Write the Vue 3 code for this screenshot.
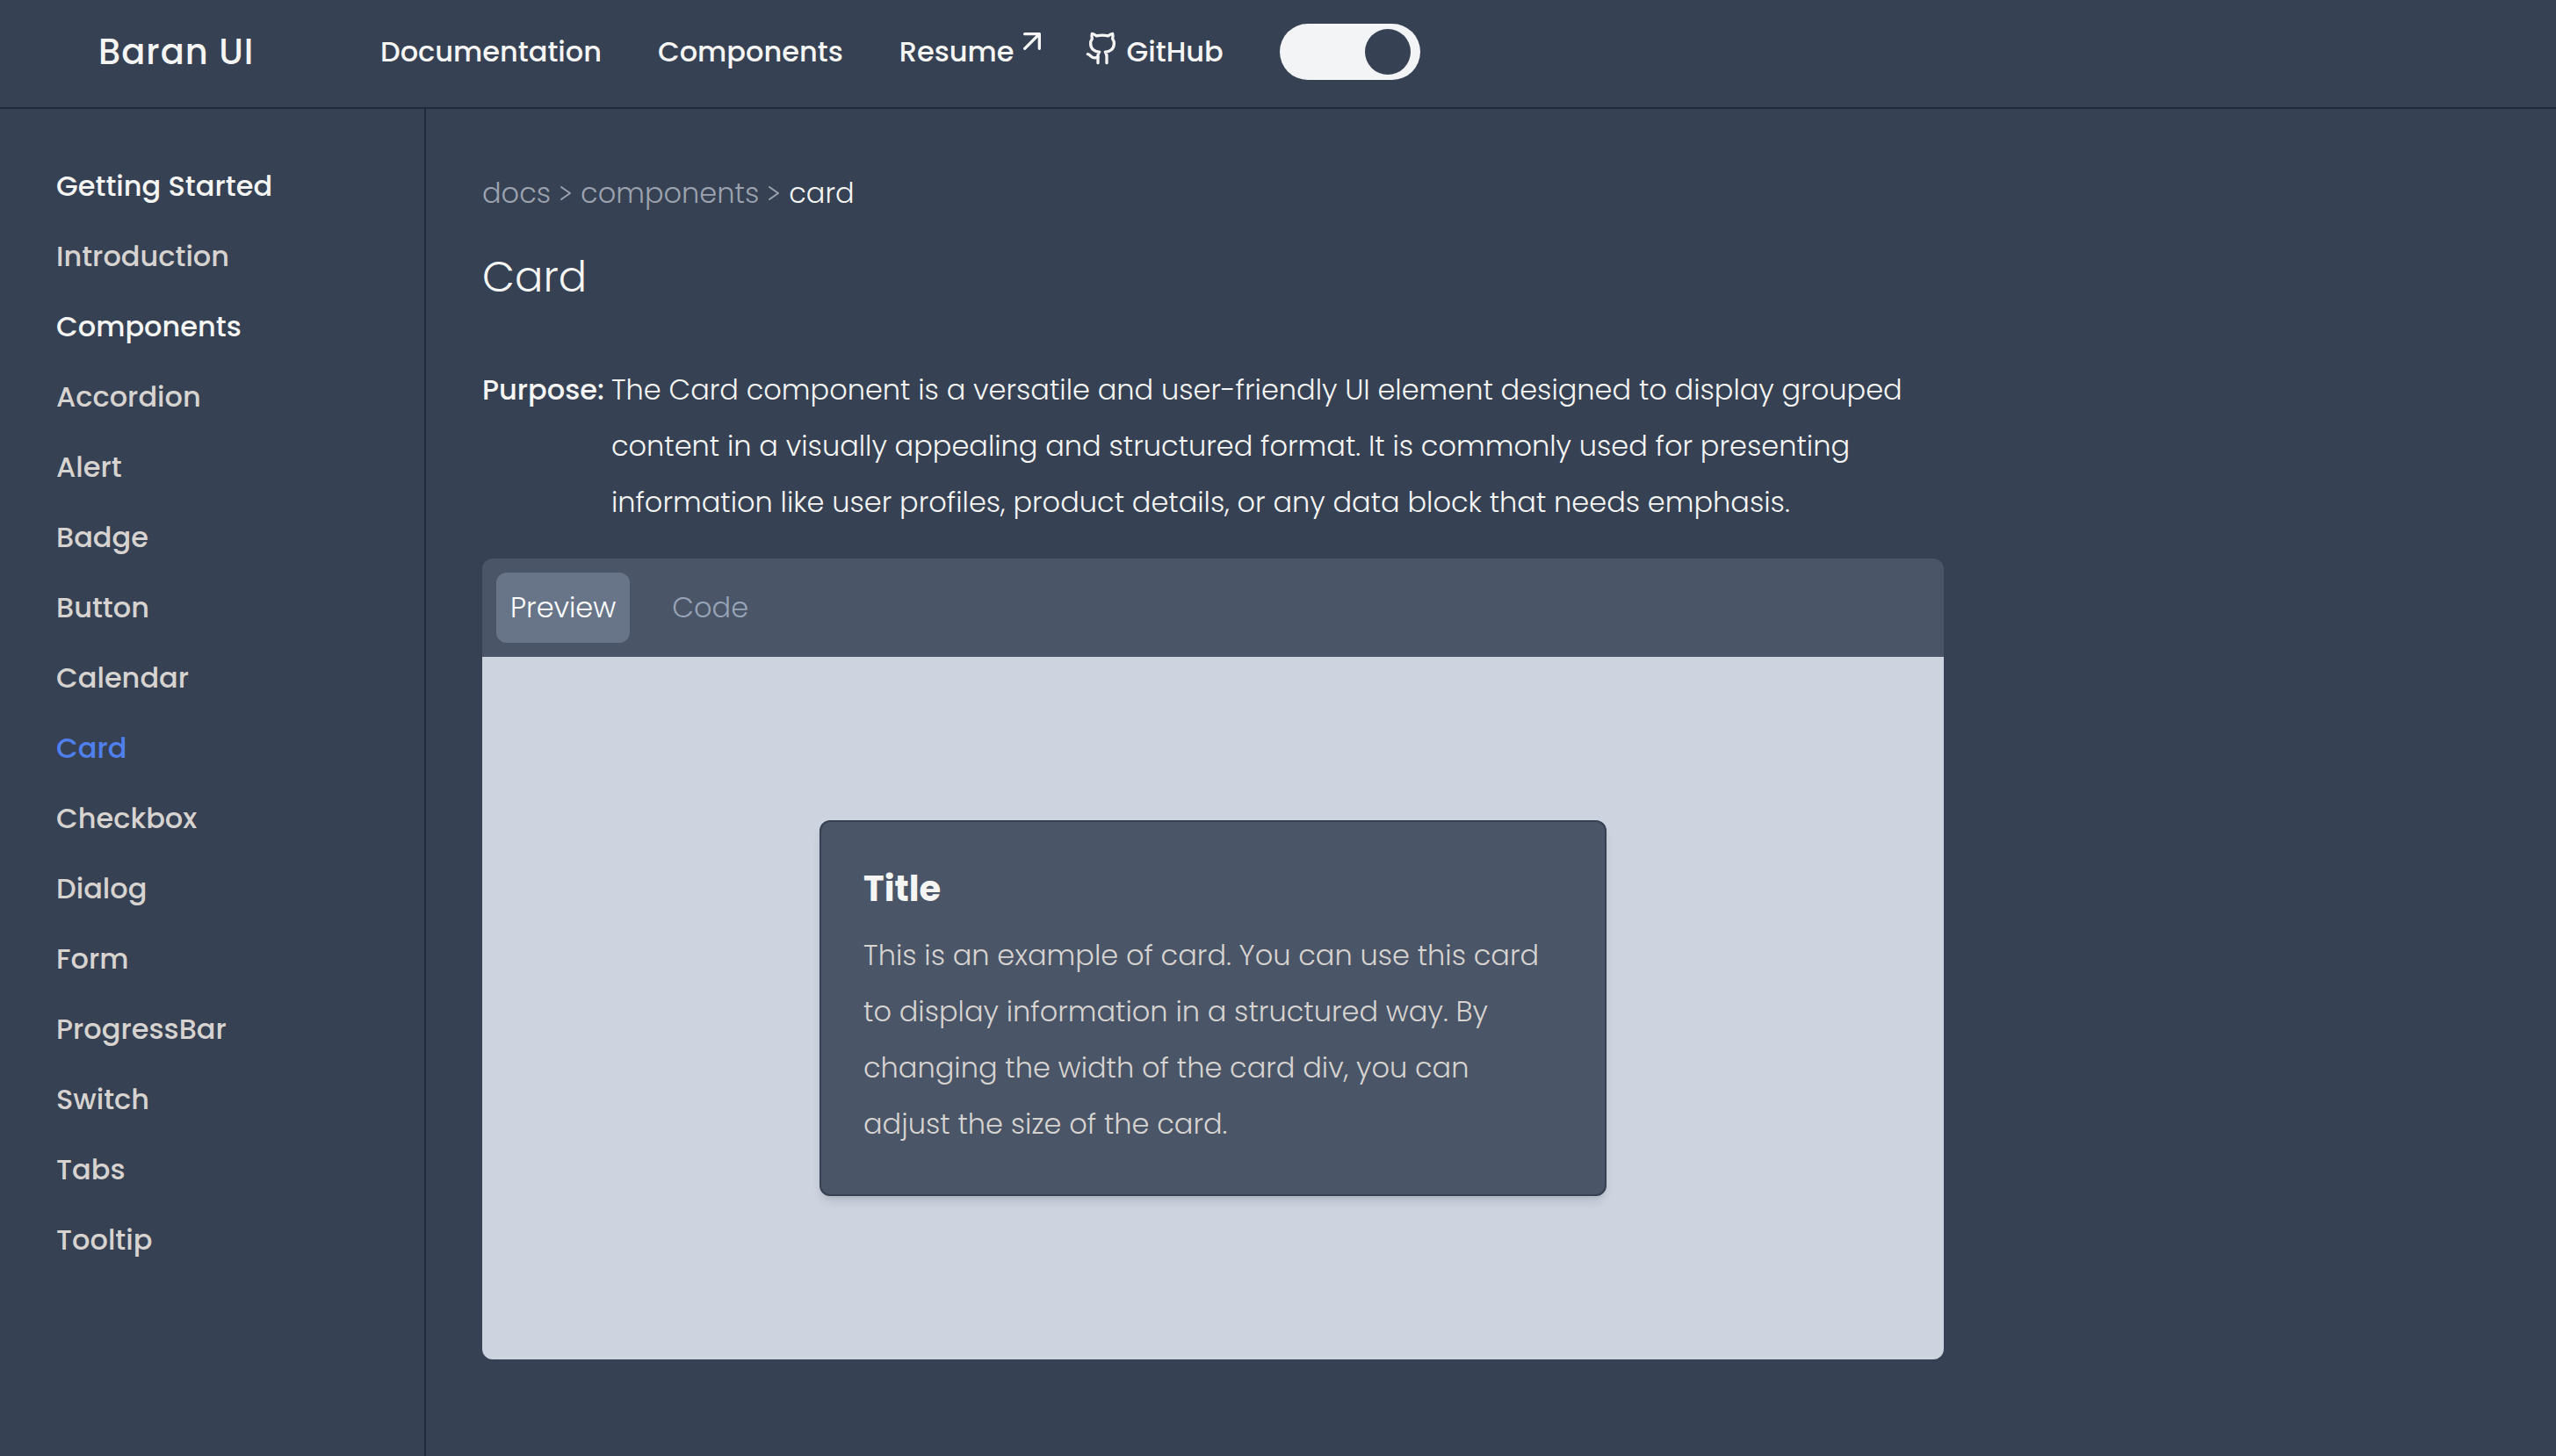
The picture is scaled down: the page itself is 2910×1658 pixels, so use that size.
<script setup>
import { ref } from 'vue'

const darkMode = ref(true)
const activeTab = ref('Preview')
const tabs = ['Preview', 'Code']

const sections = [
  { title: 'Getting Started', items: ['Introduction'] },
  {
    title: 'Components',
    items: [
      'Accordion', 'Alert', 'Badge', 'Button', 'Calendar', 'Card', 'Checkbox',
      'Dialog', 'Form', 'ProgressBar', 'Switch', 'Tabs', 'Tooltip',
    ],
  },
]
const current = 'Card'
</script>

<template>
  <div class="app">
    <header class="topbar">
      <a class="brand" href="#">Baran UI</a>
      <nav class="nav" aria-label="Main">
        <a href="#">Documentation</a>
        <a href="#">Components</a>
        <a href="#">
          Resume
          <svg class="arrow" viewBox="6 6 12 12" aria-hidden="true">
            <path d="M7 7h10v10M7 17 17 7" />
          </svg>
        </a>
        <a href="#">
          <svg class="github" viewBox="0 0 24 24" aria-hidden="true">
            <path d="M15 22v-4a4.8 4.8 0 0 0-1-3.5c3 0 6-2 6-5.5.08-1.25-.27-2.48-1-3.5.28-1.15.28-2.35 0-3.5 0 0-1 0-3 1.5-2.64-.5-5.36-.5-8 0C6 2 5 2 5 2c-.3 1.15-.3 2.35 0 3.5A5.403 5.403 0 0 0 4 9c0 3.5 3 5.5 6 5.5-.39.49-.68 1.05-.85 1.65-.17.6-.22 1.23-.15 1.85v4" />
            <path d="M9 18c-4.51 2-5-2-7-2" />
          </svg>
          GitHub
        </a>
        <input v-model="darkMode" class="toggle" type="checkbox" role="switch" aria-label="Dark mode" />
      </nav>
    </header>

    <div class="layout">
      <aside class="sidebar">
        <nav v-for="section in sections" :key="section.title" :aria-label="section.title">
          <h2>{{ section.title }}</h2>
          <a
            v-for="item in section.items"
            :key="item"
            href="#"
            :class="{ current: item === current }"
          >{{ item }}</a>
        </nav>
      </aside>

      <main class="content">
        <nav class="crumbs" aria-label="Breadcrumb">
          <a href="#">docs</a>
          <svg viewBox="0 0 16 20" aria-hidden="true"><path d="M3 3l10 7-10 7" /></svg>
          <a href="#">components</a>
          <svg viewBox="0 0 16 20" aria-hidden="true"><path d="M3 3l10 7-10 7" /></svg>
          <a href="#" class="here" aria-current="page">card</a>
        </nav>

        <h1>Card</h1>

        <div class="purpose">
          <strong>Purpose:</strong>
          <p>
            The Card component is a versatile and user-friendly UI element designed to display grouped
            content in a visually appealing and structured format. It is commonly used for presenting
            information like user profiles, product details, or any data block that needs emphasis.
          </p>
        </div>

        <section class="panel">
          <div class="tabs" role="tablist">
            <button
              v-for="tab in tabs"
              :key="tab"
              type="button"
              role="tab"
              :aria-selected="tab === activeTab"
              :class="{ active: tab === activeTab }"
              @click="activeTab = tab"
            >{{ tab }}</button>
          </div>
          <div class="stage" role="tabpanel">
            <article class="card">
              <h3>Title</h3>
              <p>
                This is an example of card. You can use this card to display information in a
                structured way. By changing the width of the card div, you can adjust the size of
                the card.
              </p>
            </article>
          </div>
        </section>
      </main>
    </div>
  </div>
</template>

<style>
body {
  margin: 0;
  background: #364153;
}
</style>

<style scoped>
.app {
  display: flex;
  flex-direction: column;
  min-height: 100vh;
  background: #364153;
  color: #f5f5f4;
  font-family: Poppins, Inter, sans-serif;
  font-size: 32px;
  line-height: 64px;
  font-weight: 300;
}
.app * {
  box-sizing: border-box;
}
h1, h2, h3, p {
  margin: 0;
}
a {
  color: inherit;
  text-decoration: none;
}
svg {
  flex: none;
  fill: none;
  stroke: currentColor;
  stroke-width: 2;
  stroke-linecap: round;
  stroke-linejoin: round;
}

.topbar {
  display: flex;
  align-items: center;
  padding: 27px 112px 31px;
  border-bottom: 2px solid #1f2a3c;
  font-weight: 500;
}
.brand {
  width: 321px;
  font-size: 40px;
  letter-spacing: 1px;
}
.nav {
  display: flex;
  align-items: center;
  gap: 64px;
}
.nav a {
  display: flex;
  align-items: center;
}
.arrow {
  width: 20px;
  height: 20px;
  margin: 10px -14px 0 10px;
  align-self: flex-start;
}
.github {
  width: 40px;
  height: 40px;
  margin: 0 8px 8px 0;
}
.toggle {
  appearance: none;
  display: flex;
  align-items: center;
  width: 160px;
  height: 64px;
  margin: 0;
  padding: 0 11px;
  border-radius: 32px;
  background: #f3f4f6;
}
.toggle::before {
  content: "";
  width: 52px;
  height: 52px;
  border-radius: 50%;
  background: #364153;
}
.toggle:checked {
  justify-content: flex-end;
}

.layout {
  display: flex;
  flex: 1;
}
.sidebar {
  flex: none;
  width: 485px;
  padding: 64px;
  border-right: 2px solid #1f2a3c;
  line-height: 48px;
  font-weight: 500;
}
.sidebar nav {
  display: flex;
  flex-direction: column;
  gap: 32px;
  margin-bottom: 32px;
}
.sidebar h2 {
  font-size: inherit;
  font-weight: 500;
}
.sidebar a {
  color: #d6d3d1;
}
.sidebar .current {
  color: #4f80ee;
}

.content {
  flex: 1;
  min-width: 0;
  padding: 64px;
}
.crumbs {
  display: flex;
  align-items: center;
  gap: 9px;
  color: #9ca3af;
}
.crumbs svg {
  width: 16px;
  height: 20px;
}
.crumbs .here {
  color: #f5f5f4;
}
h1 {
  margin: 32px 0 64px;
  font-size: 48px;
  font-weight: 300;
}
.purpose {
  display: flex;
  gap: 8px;
  max-width: 1664px;
}
.purpose strong {
  font-weight: 500;
}

.panel {
  max-width: 1664px;
  margin-top: 32px;
  border-radius: 12px;
  overflow: hidden;
}
.tabs {
  display: flex;
  gap: 32px;
  padding: 16px;
  background: #4a5567;
}
.tabs button {
  padding: 8px 16px;
  border: 0;
  border-radius: 12px;
  background: none;
  color: #97a3b6;
  font: inherit;
}
.tabs .active {
  background: #687589;
  color: #fff;
}
.stage {
  display: flex;
  align-items: center;
  justify-content: center;
  min-height: 800px;
  background: #cdd4e0;
}
.card {
  width: 896px;
  max-width: 100%;
  padding: 48px;
  border: 2px solid #364153;
  border-radius: 12px;
  background: #4a5567;
  box-shadow: 0 8px 12px -2px rgb(0 0 0 / 10%), 0 4px 8px -4px rgb(0 0 0 / 10%);
}
.card h3 {
  margin-bottom: 16px;
  font-size: 40px;
  font-weight: 700;
  line-height: 56px;
}
.card p {
  color: #d6d3d1;
}
</style>
